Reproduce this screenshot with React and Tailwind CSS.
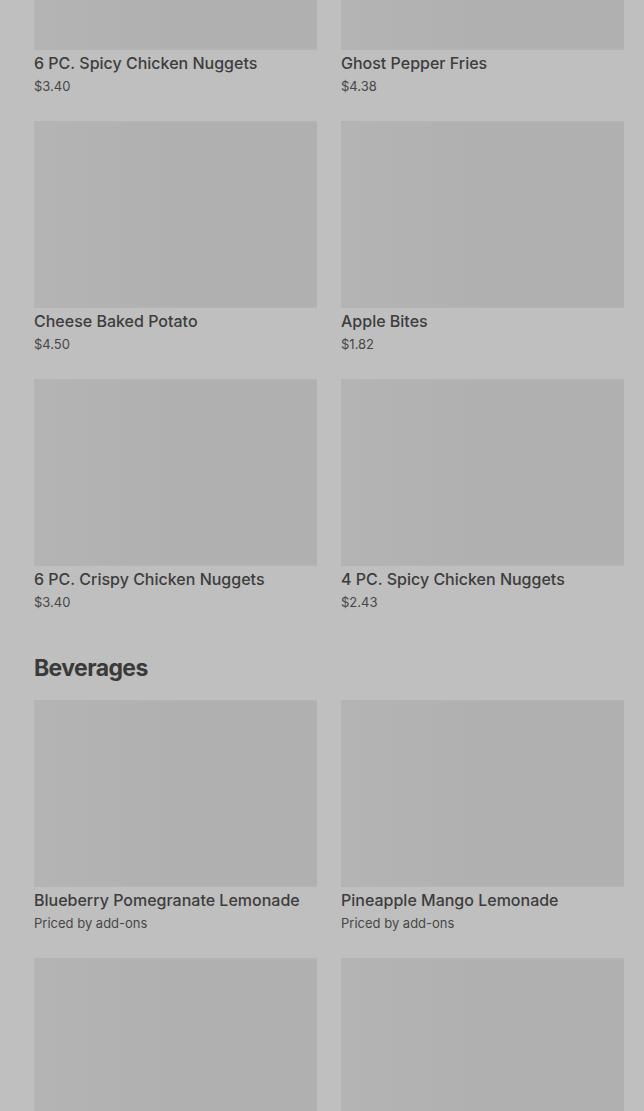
import React from "react";

const rows1 = [
  [
    { name: "6 PC. Spicy Chicken Nuggets", price: "$3.40" },
    { name: "Ghost Pepper Fries", price: "$4.38" },
  ],
  [
    { name: "Cheese Baked Potato", price: "$4.50" },
    { name: "Apple Bites", price: "$1.82" },
  ],
  [
    { name: "6 PC. Crispy Chicken Nuggets", price: "$3.40" },
    { name: "4 PC. Spicy Chicken Nuggets", price: "$2.43" },
  ],
];

const rows2 = [
  [
    { name: "Blueberry Pomegranate Lemonade", price: "Priced by add-ons" },
    { name: "Pineapple Mango Lemonade", price: "Priced by add-ons" },
  ],
  [{ name: null }, { name: null }],
];

function Card({ item }) {
  return (
    <div className="flex flex-col">
      <div className="h-[187px] bg-[#b0b0b0] bg-gradient-to-r from-[#b4b4b4] via-[#b0b0b0] to-[#b0b0b0] border-y-2 border-[#b3b3b3]" />
      {item.name && (
        <>
          <div className="mt-[1px] text-[16px] leading-[24px] font-medium text-[#3d3d3d] whitespace-nowrap">
            {item.name}
          </div>
          <div className="mt-[1px] text-[13px] leading-[20px] text-[#474747]">{item.price}</div>
        </>
      )}
    </div>
  );
}

function Grid({ rows }) {
  return (
    <div className="grid grid-cols-2 gap-x-[24px] gap-y-[25px]">
      {rows.flat().map((item, i) => (
        <Card key={i} item={item} />
      ))}
    </div>
  );
}

export default function App() {
  return (
    <div
      className="h-[1111px] w-full overflow-hidden bg-[#bfbfbf]"
      style={{ fontFamily: "Inter, 'Noto Sans', sans-serif" }}
    >
      <div className="mt-[-137px] pl-[34px] pr-[20px]">
        <Grid rows={rows1} />
        <h2 className="mt-[40px] mb-[16px] text-[23px] leading-[32px] font-bold tracking-[-0.6px] text-[#3a3a3a]">
          Beverages
        </h2>
        <Grid rows={rows2} />
      </div>
    </div>
  );
}
